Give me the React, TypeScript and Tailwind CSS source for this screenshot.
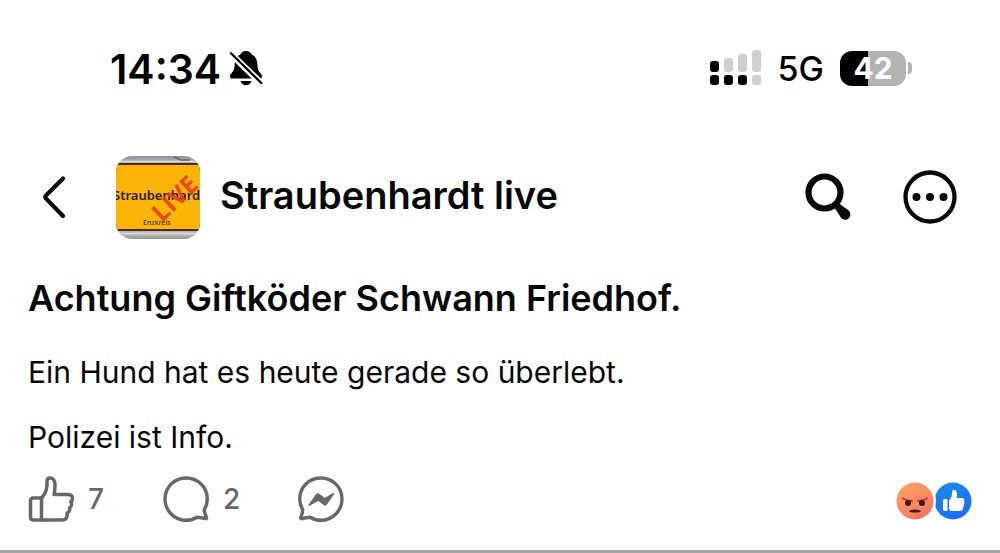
import React from "react";

function BellOff() {
  return (
    <svg viewBox="0 0 34 36" className="h-9 w-[34px]" aria-label="Stumm">
      <path d="M17 1c-3 0-5 1.500-5.600 3.600C8 6 6 9 5.700 13.500 5.400 20 4.500 21 2.300 23.500 1 25 .8 26 1 27c.2 1 1 1.500 2.300 1.500h27.400c1.300 0 2.100-.5 2.300-1.500.2-1 0-2-1.300-3.500-2.200-2.500-3.100-3.500-3.400-10C28 9 26 6 22.600 4.600 22 2.500 20 1 17 1z" fill="#000" />
      <path d="M11.500 31h11c-.6 2.600-2.800 4.300-5.500 4.300s-4.900-1.700-5.500-4.300z" fill="#000" />
      <path d="M1.500 3.500 32 33" stroke="#fff" strokeWidth="6.500" />
      <path d="M2 3.200 32.300 33" stroke="#000" strokeWidth="2.300" strokeLinecap="round" />
    </svg>
  );
}

function Signal() {
  return (
    <svg viewBox="0 0 52 36" className="h-9 w-[52px]" aria-label="Signal">
      <rect x="0" y="11" width="9" height="11" rx="3" fill="#000" />
      <rect x="14" y="8" width="9" height="14" rx="3" fill="#cfcfcf" />
      <rect x="28" y="4" width="9" height="18" rx="3" fill="#cfcfcf" />
      <rect x="42" y="0" width="9" height="22" rx="3" fill="#cfcfcf" />
      <rect x="0" y="25" width="9" height="10" rx="3" fill="#000" />
      <rect x="14" y="25" width="9" height="10" rx="3" fill="#000" />
      <rect x="28" y="25" width="9" height="10" rx="3" fill="#000" />
      <rect x="42" y="25" width="9" height="10" rx="3" fill="#cfcfcf" />
    </svg>
  );
}

function Battery() {
  return (
    <div className="flex items-center gap-0.5">
      <div className="flex h-[35px] w-[66px] items-center justify-center rounded-xl bg-linear-to-r from-black from-42% to-[#b3b3b3] to-42% text-[30px] leading-none font-bold text-white">
        42
      </div>
      <div className="h-3 w-1 rounded-r-full bg-[#b3b3b3]" />
    </div>
  );
}

function GroupPicture() {
  return (
    <svg viewBox="0 0 84 83" className="h-[83px] w-[84px] rounded-[16px]" role="img" aria-label="Gruppenbild">
      <defs>
        <linearGradient id="rim" x1="0" y1="0" x2="0" y2="1">
          <stop offset="0" stopColor="#8e8f92" />
          <stop offset=".05" stopColor="#a9aaad" />
          <stop offset=".95" stopColor="#b8b9bb" />
          <stop offset="1" stopColor="#8f9093" />
        </linearGradient>
      </defs>
      <rect width="84" height="83" fill="url(#rim)" />
      <path d="M0 5.500h84M0 77.500h84" stroke="#dcdcdc" strokeWidth="1.500" />
      <rect y="7" width="84" height="68" fill="#4a2b0c" />
      <rect y="9" width="84" height="64" fill="#fdb408" />
      <path d="M58 1l7 3 9 0" stroke="#66676b" strokeWidth="1.500" fill="none" />
      <text x="-3" y="44" fontSize="13" fontWeight="600" fill="#2b2113" fontFamily="Noto Sans, sans-serif">Straubenhard</text>
      <text x="27" y="69" fontSize="7" fontWeight="500" fill="#4a3510" fontFamily="Noto Sans, sans-serif">Enzkreis</text>
      <text transform="translate(46 67) rotate(-44)" fontSize="25" fontWeight="700" fill="#e8401c" fillOpacity=".92" fontFamily="Open Sans, sans-serif">LIVE</text>
    </svg>
  );
}

function ThumbIcon() {
  return (
    <svg viewBox="0 0 46 46" className="h-[46px] w-[46px]" fill="none" stroke="#65676b" strokeWidth="3.500" strokeLinejoin="round" strokeLinecap="round">
      <path d="M13.500 22H5.500C3.500 22 2.500 23 2.500 25v16c0 2 1 3 3 3h8z" />
      <path d="M13.500 22c3.500-3.500 5.500-8.500 5.500-14V5c0-2 1.300-3 3-3 3 0 5 2.500 5 6.500 0 4-.5 7-.8 10H40c2.800 0 4.500 1.600 4.500 3.800 0 1.700-.6 2.800-1.700 3.600.8 1 1 2.100.7 3.300-.3 1.300-1 2.100-2 2.700.4 1.200.3 2.300-.3 3.300-.5.900-1.200 1.500-2 1.800C39.400 41.500 38 44 34.500 44h-21" />
    </svg>
  );
}

function CommentIcon() {
  return (
    <svg viewBox="0 0 46 46" className="h-[46px] w-[46px]" fill="none" stroke="#65676b" strokeWidth="3.400" strokeLinejoin="round">
      <path d="M41.200 34C43 30.800 44.300 27 44.300 23 44.300 11 34.900 2 23 2S2 11.400 2 23s9.400 21.300 21 21.300c4 0 7.600-1.100 10.800-3.100 3.400.2 6.300.8 8.700 1.500.8.200 1.300-.3 1-1.100-1.200-2.800-2-5-2.300-7.600z" />
    </svg>
  );
}

function MessengerIcon() {
  return (
    <svg viewBox="0 0 46 46" className="h-[46px] w-[46px]">
      <path d="M4.800 34C3 30.800 1.700 27 1.700 23 1.700 11 11.100 2 23 2s21 9.400 21 21-9.400 21.300-21 21.300c-4 0-7.600-1.100-10.800-3.100-3.400.2-5.900.8-8.300 1.500-.8.200-1.300-.3-1-1.100.8-2.800 1.600-5 1.900-7.600z" fill="none" stroke="#65676b" strokeWidth="3.400" strokeLinejoin="round" />
      <path d="M10.500 28.700 18 18.300c.8-1.200 2-1.400 3.200-.5l5.500 4.100 8.300-4.800c.8-.4 1.500.3 1 1.100L29 28.500c-.8 1.200-2 1.500-3.200.6l-5.600-4.200-8.700 4.900c-.8.500-1.500-.4-1-1.100z" fill="#65676b" />
    </svg>
  );
}

function Reactions() {
  return (
    <svg viewBox="0 0 76 38" className="h-[38px] w-[76px]" role="img" aria-label="Wütend und Gefällt mir">
      <defs>
        <linearGradient id="angry" x1=".2" y1="0" x2=".8" y2="1">
          <stop offset="0" stopColor="#fba15e" />
          <stop offset=".55" stopColor="#fb8a64" />
          <stop offset="1" stopColor="#f96a66" />
        </linearGradient>
        <linearGradient id="like" x1=".2" y1="0" x2=".6" y2="1">
          <stop offset="0" stopColor="#1c8ae8" />
          <stop offset="1" stopColor="#1b6ef6" />
        </linearGradient>
      </defs>
      <circle cx="57" cy="19" r="18.500" fill="url(#like)" />
      <circle cx="19" cy="19" r="21" fill="#fff" />
      <circle cx="19" cy="19" r="18.500" fill="url(#angry)" />
      <path d="M7 16.500q4 2.300 9 2.500M31 16.500q-4 2.300-9 2.500" stroke="#cf2d2c" strokeWidth="2" fill="none" strokeLinecap="round" />
      <circle cx="12" cy="21" r="3" fill="#351a18" />
      <circle cx="26" cy="21" r="3" fill="#351a18" />
      <path d="M14 29.200q5-1.800 10 0-5 1.100-10 0z" fill="#45201c" stroke="#45201c" strokeWidth="1.500" strokeLinejoin="round" />
      <rect x="47" y="17" width="4.500" height="12" rx="1.500" fill="#fff" />
      <path d="M53 18.500c2.500-2.200 3-4.700 3-7.500 0-2.200.8-3.200 2-3.200 2.500 0 3.700 3 2.600 8.200h5c2.300 0 3.300 1.500 2.400 3.200.8 1 .8 2-.2 3 .5 1.200.2 2-.7 2.700.3 2.600-1 4.100-3.600 4.100H56c-2 0-3-1-3-2.500z" fill="#fff" />
    </svg>
  );
}

export default function App() {
  return (
    <main className="flex min-h-screen flex-col bg-white font-['Inter',sans-serif] text-[#080809]">
      <div className="flex h-[136px] items-center justify-between pr-[88px] pl-[110px] text-black">
        <div className="flex items-center gap-2">
          <span className="pt-0.5 text-[41px] leading-none font-semibold">14:34</span>
          <BellOff />
        </div>
        <div className="flex items-center gap-4">
          <Signal />
          <span className="pt-0.5 text-[34px] leading-none font-medium">5G</span>
          <Battery />
        </div>
      </div>

      <header className="flex h-[122px] items-center pr-[43px] pl-10">
        <button type="button" aria-label="Zurück">
          <svg viewBox="0 0 28 44" className="h-11 w-7" fill="none" stroke="#080809" strokeWidth="4.200" strokeLinecap="round" strokeLinejoin="round">
            <path d="M23 3.500 6.200 20.300q-1.700 1.700 0 3.400L23 41" />
          </svg>
        </button>
        <div className="ml-12 flex flex-1 items-center gap-5">
          <GroupPicture />
          <span className="pb-1 text-[38px] leading-[48px] font-semibold">Straubenhardt live</span>
        </div>
        <div className="flex items-center gap-[50px]">
          <button type="button" aria-label="Suchen">
            <svg viewBox="0 0 50 50" className="h-[50px] w-[50px]" fill="none" stroke="#080809">
              <circle cx="21.500" cy="20.500" r="16" strokeWidth="6.200" />
              <path d="m32 32 3 3" strokeWidth="7" />
              <path d="m31.500 35.500 6 9.500c2 3 5.500 3.600 8 1.500s2.500-6-.5-8.500l-9-6.500z" fill="#080809" stroke="none" />
            </svg>
          </button>
          <button type="button" aria-label="Mehr">
            <svg viewBox="0 0 54 54" className="h-[54px] w-[54px]" fill="#080809">
              <circle cx="27" cy="27" r="24.500" fill="none" stroke="#080809" strokeWidth="4.300" />
              <circle cx="13.500" cy="27" r="4" />
              <circle cx="27" cy="27" r="4" />
              <circle cx="40.500" cy="27" r="4" />
            </svg>
          </button>
        </div>
      </header>

      <article className="flex flex-1 flex-col px-7 pt-4">
        <h1 className="text-[36px] leading-[48px] font-semibold">Achtung Giftköder Schwann Friedhof.</h1>
        <p className="mt-[30px] text-[30px] leading-[41px]">Ein Hund hat es heute gerade so überlebt.</p>
        <p className="mt-6 text-[30px] leading-[41px]">Polizei ist Info.</p>
        <div className="mt-[18px] flex items-center text-[28px] leading-none font-medium text-[#65676b]">
          <button type="button" aria-label="Gefällt mir, 7" className="flex w-[135px] items-center gap-[14px]">
            <ThumbIcon />
            <span>7</span>
          </button>
          <button type="button" aria-label="Kommentieren, 2" className="flex w-[135px] items-center gap-[14px]">
            <CommentIcon />
            <span>2</span>
          </button>
          <button type="button" aria-label="Mit Messenger senden">
            <MessengerIcon />
          </button>
          <div className="ml-auto pt-1">
            <Reactions />
          </div>
        </div>
      </article>
      <hr className="h-[3px] border-0 bg-[#a4a5a9]" />
    </main>
  );
}
